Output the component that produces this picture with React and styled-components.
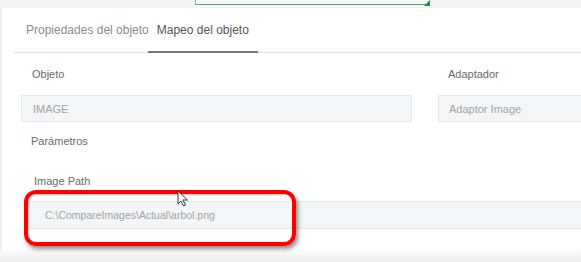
import React from 'react';
import styled, { createGlobalStyle } from 'styled-components';

const GlobalStyle = createGlobalStyle`
  html, body {
    margin: 0;
    padding: 0;
    background: #fff;
    font-family: 'Liberation Sans', Arial, sans-serif;
  }
`;

const Screen = styled.div`
  width: 581px;
  height: 262px;
  overflow: hidden;
  position: relative;
  background: #fff;
  display: flex;
  flex-direction: column;
`;

const TopStrip = styled.div`
  height: 8px;
  background: #f3f3f3;
  display: flex;
  align-items: flex-start;
  padding-left: 195px;
`;

const GreenBox = styled.div`
  width: 234px;
  height: 4px;
  background: #fafafa;
  border-left: 1px solid #7fbf9a;
  border-bottom: 1px solid #5aa77a;
`;

const GreenFlag = styled.div`
  width: 0;
  height: 0;
  border-left: 6px solid transparent;
  border-bottom: 6px solid #1f8a45;
  margin-left: -6px;
`;

const Panel = styled.div`
  flex: 1;
  display: flex;
  flex-direction: column;
  padding-left: 12px;
  border-left: 2px solid #efefef;
`;

const Tabs = styled.div`
  height: 44px;
  display: flex;
  border-bottom: 1px solid #e2e2e2;
`;

const Tab = styled.div`
  display: flex;
  align-items: center;
  padding: ${p => (p.$first ? '0 0 0 12px' : '0 9px')};
  margin-right: ${p => (p.$first ? '-1px' : '0')};
  font-size: 12px;
  color: ${p => (p.$active ? '#555' : '#8a8a8a')};
  border-bottom: 2px solid ${p => (p.$active ? '#777' : 'transparent')};
  margin-bottom: -1px;
`;

const Form = styled.div`
  padding: 12px 0 0 7px;
  display: flex;
  flex-direction: column;
`;

const Row = styled.div`
  display: grid;
  grid-template-columns: 391px 1fr;
  column-gap: 26px;
`;

const Field = styled.div`
  display: flex;
  flex-direction: column;
`;

const Label = styled.div`
  height: 18px;
  line-height: 18px;
  font-size: 11px;
  color: #6a6a6a;
  padding-left: ${p => p.$indent || 11}px;
  margin-top: ${p => p.$top || 0}px;
`;

const Input = styled.div`
  height: ${p => p.$h || 27}px;
  box-sizing: border-box;
  margin-top: ${p => p.$top || 12}px;
  background: #f3f6f8;
  border: 1px solid #e4e9ec;
  border-right: ${p => (p.$open ? 'none' : '1px solid #e4e9ec')};
  display: flex;
  align-items: center;
  padding-left: ${p => p.$pad || 11}px;
  font-size: ${p => p.$fs || 11}px;
  color: #a3a3a3;
`;

const PathSection = styled.div`
  position: relative;
  padding-left: 5px;
  display: flex;
  flex-direction: column;
`;

const Highlight = styled.div`
  position: absolute;
  left: 3px;
  top: 40px;
  width: 272px;
  height: 56px;
  box-sizing: border-box;
  border: 4px solid #f00;
  border-radius: 12px;
  box-shadow: 2px 3px 4px rgba(0, 0, 0, 0.45), inset 1px 1px 2px rgba(0, 0, 0, 0.25);
`;

const Cursor = styled.svg`
  position: absolute;
  left: 156px;
  top: 40px;
`;

const Footer = styled.div`
  height: 12px;
  background: linear-gradient(#fbfbfb, #ededed);
`;

export default function App() {
  return (
    <Screen>
      <GlobalStyle />
      <TopStrip>
        <GreenBox />
        <GreenFlag />
      </TopStrip>
      <Panel>
        <Tabs>
          <Tab $first>Propiedades del objeto</Tab>
          <Tab $active>Mapeo del objeto</Tab>
        </Tabs>
        <Form>
          <Row>
            <Field>
              <Label>Objeto</Label>
              <Input>IMAGE</Input>
            </Field>
            <Field>
              <Label $indent={10}>Adaptador</Label>
              <Input $open $pad={10}>Adaptor Image</Input>
            </Field>
          </Row>
          <Label $indent={10} $top={10}>Parámetros</Label>
          <PathSection>
            <Label $indent={8} $top={22}>Image Path</Label>
            <Input $open $h={28} $top={11} $pad={18} $fs={10.5}>C:\CompareImages\Actual\arbol.png</Input>
            <Highlight />
            <Cursor width="12" height="17" viewBox="0 0 12 17">
              <path d="M1 1 L1 14 L4 11 L6.5 16 L8.5 15 L6 10 L10.5 10 Z" fill="#fff" stroke="#333" strokeWidth="1" strokeLinejoin="round" />
            </Cursor>
          </PathSection>
        </Form>
      </Panel>
      <Footer />
    </Screen>
  );
}
